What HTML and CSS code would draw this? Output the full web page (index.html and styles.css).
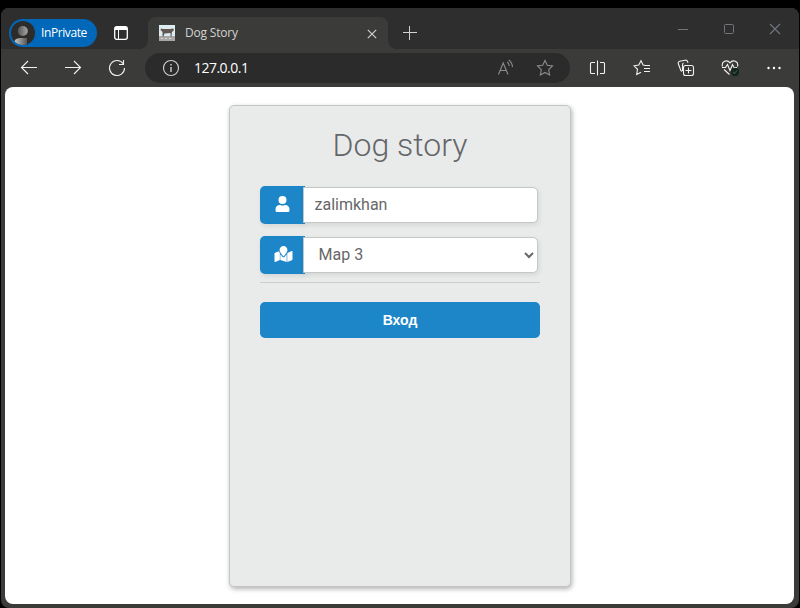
FILE: index.html
```html
<!DOCTYPE html>
<html lang="ru">
<head>
<meta charset="utf-8">
<title>Dog Story</title>
<link rel="stylesheet" href="styles.css">
</head>
<body>
<div class="window">
  <header class="titlebar">
    <div class="profile">
      <svg class="avatar" viewBox="0 0 26 26">
        <defs>
          <linearGradient id="g"><stop offset="0" stop-color="#555"/><stop offset="1" stop-color="#a5a5a5"/></linearGradient>
          <linearGradient id="h"><stop offset="0" stop-color="#ccc"/><stop offset="1" stop-color="#555"/></linearGradient>
          <clipPath id="c"><circle cx="13" cy="13" r="12"/></clipPath>
        </defs>
        <circle cx="13" cy="13" r="12" fill="#2d2c2b"/>
        <g clip-path="url(#c)"><path d="M4 27v-3q0-6 6-6h7v9z" fill="url(#h)"/><circle cx="12.800" cy="11" r="5" fill="url(#g)"/></g>
      </svg>
      <span class="profile-name">InPrivate</span>
    </div>
    <svg class="tabs-icon" viewBox="0 0 14 14"><rect x=".7" y=".7" width="12.600" height="12.600" rx="2" fill="none" stroke="#fff" stroke-width="1.300"/><path d="M1 1h12v3H1z" fill="#fff"/><path d="M4.500 4v9" stroke="#fff"/></svg>
    <div class="tab">
      <svg class="favicon" viewBox="0 0 16 16"><path fill="#dcecf0" d="M0 0h16v16H0z"/><path fill="#a9a7a6" d="M0 11h16v5H0z"/><path d="M2 3.500l2 .5h7l3-.5 1 1-1 2h-1l-.5 5h-1V8l-6 .5-1 3H3.500L3.500 7 1.500 5z" fill="#625552"/><path d="M2 13.500h12" stroke="#d5d5d5" stroke-dasharray="2 2"/></svg>
      <span class="tab-title">Dog Story</span>
      <svg class="tab-close" viewBox="0 0 10 10"><path d="M.8.8l8.400 8.400M9.200.8L.8 9.200" stroke="#d5d5d4" stroke-width="1.100"/></svg>
    </div>
    <svg class="new-tab" viewBox="0 0 14 14"><path d="M0 6.500h14M6.500 0v14" stroke="#d2d2d2"/></svg>
    <div class="controls">
      <svg viewBox="0 0 12 12"><path d="M1 6.500h10" stroke="#73757c"/></svg>
      <svg viewBox="0 0 12 12"><rect x="1.500" y="1.500" width="9" height="9" rx="1" fill="none" stroke="#73757c"/></svg>
      <svg viewBox="0 0 12 12"><path d="M1 1l10 10M11 1L1 11" stroke="#73757c" stroke-width="1.100"/></svg>
    </div>
  </header>
  <nav class="toolbar">
    <span class="tool"><svg viewBox="0 0 18 18"><path d="M17 8.500H1.500M8 2L1.500 8.500 8 15"/></svg></span>
    <span class="tool"><svg viewBox="0 0 18 18"><path d="M1 8.500h15.500M10 2L16.500 8.500 10 15"/></svg></span>
    <span class="tool"><svg viewBox="0 0 18 18"><path d="M15.200 4.800A7.500 7.500 0 1 0 16.500 9M15.500 1v4.500H11"/></svg></span>
    <div class="address">
      <svg class="info" viewBox="0 0 18 18"><circle cx="9" cy="9" r="7.500"/><path d="M9 8v5M9 5v1.500" stroke-width="1.400"/></svg>
      <span class="url">127.0.0.1</span>
      <svg class="dim read" viewBox="0 0 18 18"><path d="M1.500 15.500L6.200 4l4.800 11.500M3.200 11.500h6M10.200 3q2 1.500 2 4M11.700 1q3.500 2.500 3.800 7"/></svg>
      <svg class="dim" viewBox="0 0 18 18"><path d="M9 1.500l2.300 4.800 5.200.7-3.800 3.700.9 5.300L9 13.500 4.400 16l.9-5.300L1.500 7l5.200-.7z"/></svg>
    </div>
    <span class="tool split"><svg viewBox="0 0 18 18"><path d="M6 3.500H2.500Q1.500 3.500 1.500 4.500v9q0 1 1 1H6M11 3.500h3.500q1 0 1 1v9q0 1-1 1H11M8.500 1.500v15"/></svg></span>
    <span class="tool"><svg viewBox="0 0 18 18"><path d="M12 6.200l-1.900-.2L8 1.700 5.800 6l-4.800.8 3.500 3.500-.8 5.200 4.300-2.300M11.500 6.500H17M11 9.500h6M11 12.500h6"/></svg></span>
    <span class="tool"><svg viewBox="0 0 18 18"><path d="M5 12.500L3.800 11.500 1.200 4.500q-.3-1.600 1.500-2.200L8 1.200q2-.4 2.600 1.400l.4 1.200M5.500 12V6q0-1.500 1-2"/><rect x="6.500" y="6.500" width="10" height="10" rx="2"/><path d="M11.500 8.500v6M8.500 11.500h6"/></svg></span>
    <span class="tool"><svg viewBox="0 0 18 18"><path d="M1.500 7.500C0 2.500 6 0 9 3.800 12 0 18 2.500 16.500 7.500M1 8.500h3.500l2-3 2.500 6 2.500-6 1.500 3h3M3 10.500l5.500 5"/><circle cx="14" cy="13" r="4.200" class="badge"/><path d="M12 13l1.500 1.500 2.500-3" class="tick"/></svg></span>
    <span class="tool"><svg viewBox="0 0 18 18"><g class="dots"><circle cx="3.500" cy="9" r="1.200"/><circle cx="9" cy="9" r="1.200"/><circle cx="14.500" cy="9" r="1.200"/></g></svg></span>
  </nav>
  <main class="page">
    <form class="card">
      <h1 class="heading">Dog story</h1>
      <div class="field">
        <span class="addon"><svg class="user" viewBox="0 0 448 512"><path d="M224 256a128 128 0 1 0 0-256 128 128 0 0 0 0 256zm90 32h-17a174 174 0 0 1-146 0h-17A134 134 0 0 0 0 422v42a48 48 0 0 0 48 48h352a48 48 0 0 0 48-48v-42a134 134 0 0 0-134-134z"/></svg></span>
        <input class="control" type="text" value="zalimkhan" aria-label="Name">
      </div>
      <div class="field">
        <span class="addon"><svg class="map" viewBox="0 0 576 512"><path d="M288 0c-70 0-126 56-126 126 0 56 82 159 114 196a16 16 0 0 0 24 0c32-37 114-140 114-196C414 56 358 0 288 0zM20 216a32 32 0 0 0-20 30v250c0 11 11 19 22 15l150-63V225q-20-24-32-54zM288 360c-14 0-28-6-37-17q-32-37-65-80v185l204 64V263q-33 43-65 80c-9 11-23 17-37 17zM554 161l-146 63v288l148-56a32 32 0 0 0 20-30V176c0-11-11-19-22-15z"/></svg></span>
        <select class="control" aria-label="Map"><option>Map 3</option></select>
      </div>
      <hr class="rule">
      <button class="submit" type="button">Вход</button>
    </form>
  </main>
</div>
</body>
</html>
```

FILE: styles.css
```css
* { box-sizing: border-box; }
body {
  margin: 0;
  height: 608px;
  padding: 8px 1px 0;
  background: #000;
  overflow: hidden;
  font-family: Roboto, "Liberation Sans", sans-serif;
}
svg { display: block; flex: none; }
.window {
  height: 600px;
  display: flex;
  flex-direction: column;
  background: #3b3b39;
  border-radius: 8px;
  overflow: hidden;
}
.titlebar {
  height: 41px;
  flex: none;
  display: flex;
  align-items: center;
  padding-left: 8px;
  background: #2e2e2e;
  font-family: "Open Sans", "Noto Sans", sans-serif;
  font-size: 12px;
}
.profile {
  width: 88px;
  height: 28px;
  margin-top: 9px;
  padding-left: 1px;
  display: flex;
  align-items: center;
  border-radius: 14px;
  background: #0067b9;
  color: #fff;
}
.avatar { width: 26px; height: 26px; }
.profile-name { margin: 0 0 2px 5px; letter-spacing: -0.4px; white-space: nowrap; }
.tabs-icon { width: 14px; height: 14px; margin: 9px 0 0 17px; }
.tab {
  position: relative;
  align-self: flex-end;
  width: 240px;
  height: 32px;
  margin-left: 20px;
  padding: 0 11px 0 11px;
  display: flex;
  align-items: center;
  border-radius: 8px 8px 0 0;
  background: #3b3b39;
  color: #d2d2d0;
}
.tab::before, .tab::after {
  content: "";
  position: absolute;
  bottom: 0;
  width: 8px;
  height: 8px;
}
.tab::before { left: -8px; background: radial-gradient(circle at 0 0, transparent 7.5px, #3b3b39 8px); }
.tab::after { right: -8px; background: radial-gradient(circle at 100% 0, transparent 7.5px, #3b3b39 8px); }
.favicon { width: 16px; height: 16px; }
.tab-title { margin: 0 0 2px 10px; letter-spacing: -0.18px; }
.tab-close { width: 10px; height: 10px; margin: 1px 0 0 auto; }
.new-tab { width: 14px; height: 14px; margin: 8px 0 0 15px; }
.controls { display: flex; gap: 34px; margin: 0 18px 0 auto; }
.controls svg { width: 12px; height: 12px; }
.toolbar {
  height: 38px;
  flex: none;
  display: flex;
  align-items: center;
  padding-left: 6px;
}
.tool { width: 44px; flex: none; display: flex; justify-content: center; }
.toolbar svg { width: 18px; height: 18px; fill: none; stroke: #f1f1f1; stroke-width: 1.1; }
.toolbar .dots { fill: #fff; stroke: none; }
.toolbar .badge { fill: #14251c; stroke: none; }
.toolbar .tick { stroke: #3c5446; }
.address {
  width: 425px;
  height: 30px;
  margin-left: 6px;
  padding: 0 16px 0 17px;
  display: flex;
  align-items: center;
  border-radius: 15px;
  background: #2b2b2b;
}
.toolbar .info { stroke: #d2d2d2; }
.toolbar .dim { stroke: #8c8c90; margin-left: 22px; }
.toolbar .read { margin-right: -1px; }
.url {
  margin: 0 auto 2px 14px;
  color: #fff;
  font: 14px "Open Sans", "Noto Sans", sans-serif;
  letter-spacing: -0.52px;
}
.split { margin-left: 6px; }
.page {
  height: 517px;
  flex: none;
  margin: 0 5px 0 4px;
  padding-top: 18px;
  background: #fff;
  border-radius: 8px;
}
.card {
  width: 342px;
  height: 482px;
  margin-left: 224px;
  padding: 19px 30px 0;
  background: #e9ebea;
  border: 1px solid #c4c5c5;
  border-radius: 5px;
  box-shadow: 1px 2px 5px rgba(0, 0, 0, .31);
}
.heading {
  margin: 0 0 20px;
  height: 41px;
  line-height: 41px;
  text-align: center;
  font-size: 32px;
  font-weight: 300;
  color: #656669;
}
.field { display: flex; align-items: center; height: 38px; margin-bottom: 12px; }
.addon {
  width: 45px;
  height: 38px;
  flex: none;
  display: flex;
  justify-content: center;
  align-items: center;
  background: #1d86c8;
  border-radius: 5px 0 0 5px;
  box-shadow: 1px 2px 5px rgba(0, 0, 0, .09);
}
.addon svg { fill: #fff; height: 16px; margin-bottom: 2px; }
.user { width: 15px; }
.map { width: 19px; margin-left: 2px; }
.control {
  position: relative;
  width: 235px;
  height: 36px;
  margin: 0 0 0 -2px;
  padding: 0 10.5px 2px;
  font: 16px Roboto, sans-serif;
  color: #676767;
  background: #fff;
  border: 1px solid #c5c6c6;
  border-radius: 0 5px 5px 0;
  box-shadow: 1px 2px 5px rgba(0, 0, 0, .09);
}
.rule { margin: 8px 0 19px; height: 1px; border: 0; background: #cccece; }
.field:has(select) { margin-bottom: 0; }
.submit {
  display: block;
  width: 280px;
  height: 36px;
  padding: 0;
  border: 0;
  border-radius: 5px;
  background: #1d86c8;
  color: #fff;
  font: 700 14px "Liberation Sans", sans-serif;
}
```
